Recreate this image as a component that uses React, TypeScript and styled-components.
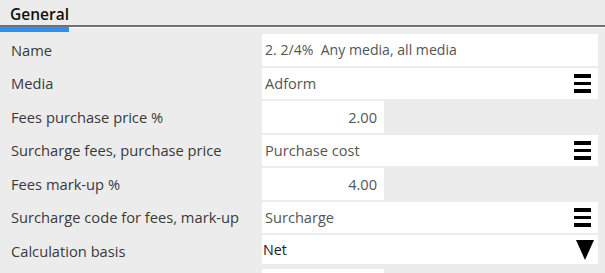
import React from "react";
import styled, { createGlobalStyle } from "styled-components";

const GlobalStyle = createGlobalStyle`
  html, body {
    margin: 0;
    padding: 0;
    background: #ececec;
  }
  body {
    font-family: "Open Sans", "Noto Sans", sans-serif;
    width: 605px;
    height: 273px;
    overflow: hidden;
  }
`;

const Page = styled.div`
  display: flex;
  flex-direction: column;
  background: #ececec;
`;

const TabHeader = styled.div`
  height: 25px;
  display: flex;
  align-items: flex-end;
`;

const TabTitle = styled.div`
  padding-left: 10px;
  font-size: 15.5px;
  font-weight: 600;
  color: #111;
  line-height: 22px;
`;

const TabRule = styled.div`
  height: 5px;
  border-top: 2px solid #707070;
  background: linear-gradient(#ffffff 0 1px, transparent 1px);
  margin-bottom: 2px;
`;

const TabIndicator = styled.div`
  width: 69px;
  height: 5px;
  background: #2f8ff0;
`;

const Form = styled.div`
  display: grid;
  grid-template-columns: 262px 336px;
  grid-auto-rows: 31.5px;
  row-gap: 2px;
`;

const Label = styled.div`
  padding-left: 11px;
  font-size: 14.7px;
  color: #3a3a3a;
  display: flex;
  align-items: center;
  white-space: nowrap;
`;

const Field = styled.div<{ $width?: number; $align?: "left" | "right"; $size?: number }>`
  background: #ffffff;
  width: ${(p) => (p.$width ? `${p.$width}px` : "100%")};
  height: 100%;
  box-sizing: border-box;
  display: flex;
  align-items: center;
  justify-content: ${(p) => (p.$align === "right" ? "flex-end" : "space-between")};
  padding: 0 7px 0 3px;
  font-size: ${(p) => p.$size ?? 14.6}px;
  color: #555;
  white-space: pre;
`;

const SelectField = styled.div`
  background: #ffffff;
  height: 29px;
  box-sizing: border-box;
  display: flex;
  align-items: center;
  justify-content: space-between;
  padding: 0 4px 0 1px;
  font-size: 14.3px;
  color: #222;
`;

const MenuIcon = styled.span`
  display: flex;
  flex-direction: column;
  gap: 4px;
  width: 17px;
  & > i {
    display: block;
    height: 3.5px;
    background: #000;
  }
`;

const Hamburger = () => (
  <MenuIcon>
    <i />
    <i />
    <i />
  </MenuIcon>
);

const Arrow = () => (
  <svg width="18" height="20" viewBox="0 0 18 20">
    <polygon points="0,0 18,0 9,20" fill="#000" />
  </svg>
);

export default function App() {
  return (
    <>
      <GlobalStyle />
      <Page>
        <TabHeader>
          <TabTitle>General</TabTitle>
        </TabHeader>
        <TabRule>
          <TabIndicator />
        </TabRule>
        <Form>
          <Label>Name</Label>
          <Field $size={14.1}>{"2. 2/4%  Any media, all media"}</Field>

          <Label>Media</Label>
          <Field>
            Adform
            <Hamburger />
          </Field>

          <Label>Fees purchase price %</Label>
          <Field $width={122} $align="right">2.00</Field>

          <Label>Surcharge fees, purchase price</Label>
          <Field>
            Purchase cost
            <Hamburger />
          </Field>

          <Label>Fees mark-up %</Label>
          <Field $width={122} $align="right">4.00</Field>

          <Label>Surcharge code for fees, mark-up</Label>
          <Field>
            Surcharge
            <Hamburger />
          </Field>

          <Label>Calculation basis</Label>
          <SelectField>
            Net
            <Arrow />
          </SelectField>

          <Label></Label>
          <Field $width={122} $align="right"></Field>
        </Form>
      </Page>
    </>
  );
}
